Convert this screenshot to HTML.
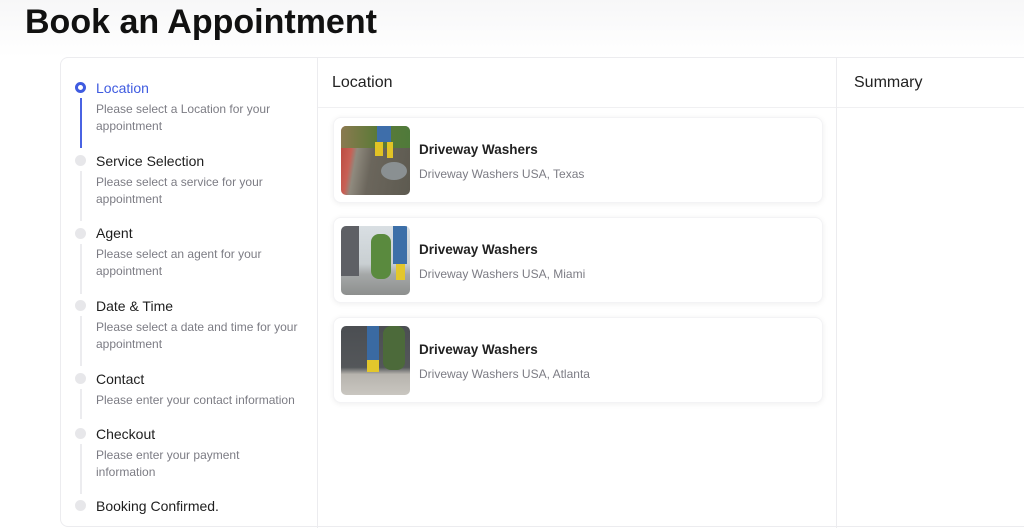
<!DOCTYPE html>
<html><head><meta charset="utf-8"><style>
*{box-sizing:border-box;margin:0;padding:0}
body{width:1024px;height:518px;overflow:hidden;background:#fff;font-family:"Liberation Sans",Arial,sans-serif;position:relative}
h1{position:absolute;left:25px;top:3px;font-size:34px;font-weight:bold;color:#111}
.topfade{position:absolute;left:0;top:0;width:1024px;height:57px;background:linear-gradient(#f7f7f8,#fff)}
.panel{position:absolute;left:60px;top:57px;width:980px;height:470px;border:1px solid #ececef;border-radius:8px;background:#fff}
.side{position:absolute;left:0;top:0;width:257px;height:470px;border-right:1px solid #ececef}
.mid{position:absolute;left:257px;top:0;width:519px;height:470px;border-right:1px solid #ececef}
.hdr{height:50px;border-bottom:1px solid #f0f0f2;font-size:16px;color:#222;padding:16px 0 0 14px}
.step{position:absolute;left:35px;font-size:14px;color:#1e1e1e}
.step .d{font-size:12px;color:#7c7c84;line-height:17px;margin-top:5px;width:210px}
.dot{position:absolute;left:14px;width:11px;height:11px;border-radius:50%;background:#e7e7ea}
.line{position:absolute;left:19px;width:2px;background:#ececef}
.card{position:absolute;left:15px;width:490px;height:86px;border-radius:8px;box-shadow:0 1px 6px rgba(0,0,0,.07);border:1px solid #f3f3f5;background:#fff}
.img{position:absolute;left:7px;top:8px;width:69px;height:69px;border-radius:5px;overflow:hidden}
.t{position:absolute;left:85px;top:24px;font-size:13.5px;font-weight:bold;color:#222}
.s{position:absolute;left:85px;top:49px;font-size:12px;color:#7c7c84}
</style></head><body>
<div class="topfade"></div>
<h1>Book an Appointment</h1>
<div class="panel">
 <div class="side">
  <div class="dot" style="top:24px;background:#fff;border:3px solid #3f5be0"></div>
  <div class="line" style="top:40px;height:50px;background:#4a63e3"></div>
  <div class="step" style="top:22px"><span style="color:#3f5be0">Location</span><div class="d">Please select a Location for your appointment</div></div>
  <div class="dot" style="top:97px"></div><div class="line" style="top:113px;height:50px"></div>
  <div class="step" style="top:95px">Service Selection<div class="d">Please select a service for your appointment</div></div>
  <div class="dot" style="top:170px"></div><div class="line" style="top:186px;height:50px"></div>
  <div class="step" style="top:167px">Agent<div class="d">Please select an agent for your appointment</div></div>
  <div class="dot" style="top:242px"></div><div class="line" style="top:258px;height:50px"></div>
  <div class="step" style="top:240px">Date &amp; Time<div class="d">Please select a date and time for your appointment</div></div>
  <div class="dot" style="top:315px"></div><div class="line" style="top:331px;height:30px"></div>
  <div class="step" style="top:313px">Contact<div class="d">Please enter your contact information</div></div>
  <div class="dot" style="top:370px"></div><div class="line" style="top:386px;height:50px"></div>
  <div class="step" style="top:368px">Checkout<div class="d" style="width:160px">Please enter your payment information</div></div>
  <div class="dot" style="top:442px"></div>
  <div class="step" style="top:440px">Booking Confirmed.</div>
 </div>
 <div class="mid">
  <div class="hdr">Location</div>
  <div class="card" style="top:59px">
   <div class="img" style="background:linear-gradient(100deg,#b8453a 0,#c86055 18%,#8f8a7e 25%,#6b665c 45%,#5d5a50 100%)">
     <div style="position:absolute;left:0;top:0;width:69px;height:22px;background:linear-gradient(90deg,#8a7a50,#5d7a38,#4f7a3a)"></div>
     <div style="position:absolute;left:36px;top:0;width:14px;height:16px;background:#3e6eaa"></div>
     <div style="position:absolute;left:34px;top:16px;width:8px;height:14px;background:#e2c325"></div>
     <div style="position:absolute;left:46px;top:16px;width:6px;height:16px;background:#e2c325"></div>
     <div style="position:absolute;left:40px;top:36px;width:26px;height:18px;border-radius:50%;background:#8a9092"></div>
   </div>
   <div class="t">Driveway Washers</div><div class="s">Driveway Washers USA, Texas</div>
  </div>
  <div class="card" style="top:159px">
   <div class="img" style="background:linear-gradient(180deg,#d9dfe3 0,#c9cfd2 55%,#a5a8a8 70%,#8d8f8e 100%)">
     <div style="position:absolute;left:0;top:0;width:18px;height:50px;background:#5e6065"></div>
     <div style="position:absolute;left:30px;top:8px;width:20px;height:45px;border-radius:8px;background:#5a8a3e"></div>
     <div style="position:absolute;left:52px;top:0;width:14px;height:38px;background:#3c6fa8"></div>
     <div style="position:absolute;left:55px;top:38px;width:9px;height:16px;background:#e3c72c"></div>
   </div>
   <div class="t">Driveway Washers</div><div class="s">Driveway Washers USA, Miami</div>
  </div>
  <div class="card" style="top:259px">
   <div class="img" style="background:linear-gradient(180deg,#4b4e52 0,#54575a 60%,#b7b4ae 70%,#c9c6c0 100%)">
     <div style="position:absolute;left:42px;top:0;width:22px;height:44px;border-radius:8px;background:#4c6a3a"></div>
     <div style="position:absolute;left:26px;top:0;width:12px;height:34px;background:#3a6aa2"></div>
     <div style="position:absolute;left:26px;top:34px;width:12px;height:12px;background:#e3c72c"></div>
   </div>
   <div class="t">Driveway Washers</div><div class="s">Driveway Washers USA, Atlanta</div>
  </div>
 </div>
 <div style="position:absolute;left:776px;top:0;width:204px"><div class="hdr" style="padding-left:17px">Summary</div></div>
</div>
</body></html>
